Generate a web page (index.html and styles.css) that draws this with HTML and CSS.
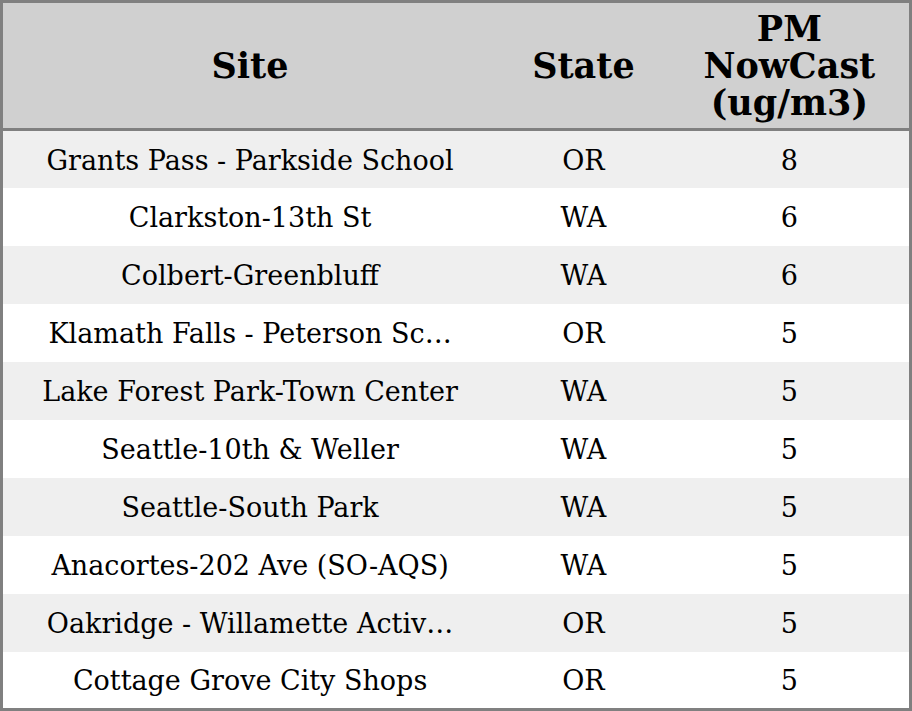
FILE: index.html
```html
<!DOCTYPE html>
<html>
<head>
<meta charset="utf-8">
<link rel="stylesheet" href="styles.css">
</head>
<body>
<table class="aq-table">
  <colgroup>
    <col class="col-site">
    <col class="col-state">
    <col class="col-pm">
  </colgroup>
  <thead>
    <tr class="head-row">
      <th>Site</th>
      <th>State</th>
      <th>PM<br>NowCast<br>(ug/m3)</th>
    </tr>
  </thead>
  <tbody>
    <tr class="odd"><td>Grants Pass - Parkside School</td><td>OR</td><td>8</td></tr>
    <tr><td>Clarkston-13th St</td><td>WA</td><td>6</td></tr>
    <tr class="odd"><td>Colbert-Greenbluff</td><td>WA</td><td>6</td></tr>
    <tr><td>Klamath Falls - Peterson Sc…</td><td>OR</td><td>5</td></tr>
    <tr class="odd"><td>Lake Forest Park-Town Center</td><td>WA</td><td>5</td></tr>
    <tr><td>Seattle-10th &amp; Weller</td><td>WA</td><td>5</td></tr>
    <tr class="odd"><td>Seattle-South Park</td><td>WA</td><td>5</td></tr>
    <tr><td>Anacortes-202 Ave (SO-AQS)</td><td>WA</td><td>5</td></tr>
    <tr class="odd"><td>Oakridge - Willamette Activ…</td><td>OR</td><td>5</td></tr>
    <tr><td>Cottage Grove City Shops</td><td>OR</td><td>5</td></tr>
  </tbody>
</table>
</body>
</html>
```
FILE: styles.css
```css
html, body {
  margin: 0;
  padding: 0;
  background: #ffffff;
}
body {
  font-family: "DejaVu Serif", serif;
  color: #000;
}
.aq-table {
  width: 912px;
  height: 711px;
  border-collapse: collapse;
  border: 3px solid #808080;
  table-layout: fixed;
}
.col-site { width: 494px; }
.col-state { width: 172px; }
.col-pm { width: 240px; }
.head-row {
  background: #d0d0d0;
  height: 128px;
}
.head-row th {
  font-size: 35px;
  font-weight: bold;
  line-height: 37.3px;
  text-align: center;
  vertical-align: middle;
  padding: 0;
  border-bottom: 3px solid #808080;
}
tbody tr {
  height: 57.7px;
  background: #ffffff;
}
tbody tr.odd {
  background: #efefef;
}
tbody td {
  font-size: 27px;
  line-height: 30px;
  text-align: center;
  vertical-align: middle;
  padding: 3px 0 0 0;
  white-space: nowrap;
}
```
